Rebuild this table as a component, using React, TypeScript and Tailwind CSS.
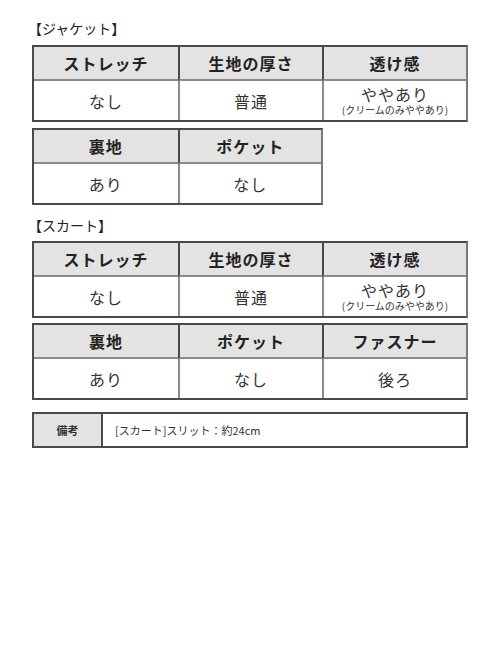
import React from "react";

type Cell = { main: string; sub?: string };

function SpecTable({ heads, cells, cols }: { heads: string[]; cells: Cell[]; cols: 2 | 3 }) {
  return (
    <div
      className={`grid border-2 border-[#4a4a4a] border-r-[#7a7a7a] ${cols === 3 ? "w-[436px] grid-cols-3" : "w-[291px] grid-cols-2"}`}
    >
      {heads.map((h, i) => (
        <div
          key={h}
          className={`flex h-[34px] items-center justify-center border-b-2 border-b-[#8a8a8a] bg-[#e3e3e3] text-[16px] font-bold tracking-[1px] text-[#222] ${
            i > 0 ? "border-l-2 border-l-[#4a4a4a]" : ""
          }`}
        >
          {h}
        </div>
      ))}
      {cells.map((c, i) => (
        <div
          key={i}
          className={`flex h-[39px] flex-col items-center justify-center text-[#333] ${
            i > 0 ? "border-l-2 border-l-[#8a8a8a]" : ""
          }`}
        >
          <span className={`text-[16px] tracking-[1px] ${c.sub ? "leading-[16px]" : "leading-[18px]"}`}>{c.main}</span>
          {c.sub && <span className="mt-[2px] text-[10px] leading-[12px]">{c.sub}</span>}
        </div>
      ))}
    </div>
  );
}

export default function App() {
  const font = { fontFamily: '"Noto Sans CJK JP", "Noto Sans", sans-serif' };
  const row1 = {
    heads: ["ストレッチ", "生地の厚さ", "透け感"],
    cells: [{ main: "なし" }, { main: "普通" }, { main: "ややあり", sub: "(クリームのみややあり)" }],
  };

  return (
    <div className="h-[667px] w-[500px] bg-white pl-[32px] pt-[18px]" style={font}>
      {/* Jacket */}
      <div className="-ml-[4px] mb-[7px] text-[14px] leading-[20px] text-[#222]">【ジャケット】</div>
      <div className="flex flex-col gap-[6px]">
        <SpecTable cols={3} {...row1} />
        <SpecTable cols={2} heads={["裏地", "ポケット"]} cells={[{ main: "あり" }, { main: "なし" }]} />
      </div>

      {/* Skirt */}
      <div className="-ml-[4px] mb-[6px] mt-[10px] text-[14px] leading-[20px] text-[#222]">【スカート】</div>
      <div className="flex flex-col gap-[5px]">
        <SpecTable cols={3} {...row1} />
        <SpecTable
          cols={3}
          heads={["裏地", "ポケット", "ファスナー"]}
          cells={[{ main: "あり" }, { main: "なし" }, { main: "後ろ" }]}
        />
      </div>

      {/* Note */}
      <div className="mt-[12px] flex h-[36px] w-[436px] border-2 border-[#4a4a4a]">
        <div className="flex w-[69px] items-center justify-center border-r-2 border-r-[#4a4a4a] bg-[#e3e3e3] text-[11px] font-bold text-[#333]">
          備考
        </div>
        <div className="flex items-center pl-[12px] text-[11px] text-[#333]">[スカート]スリット：約24cm</div>
      </div>
    </div>
  );
}
